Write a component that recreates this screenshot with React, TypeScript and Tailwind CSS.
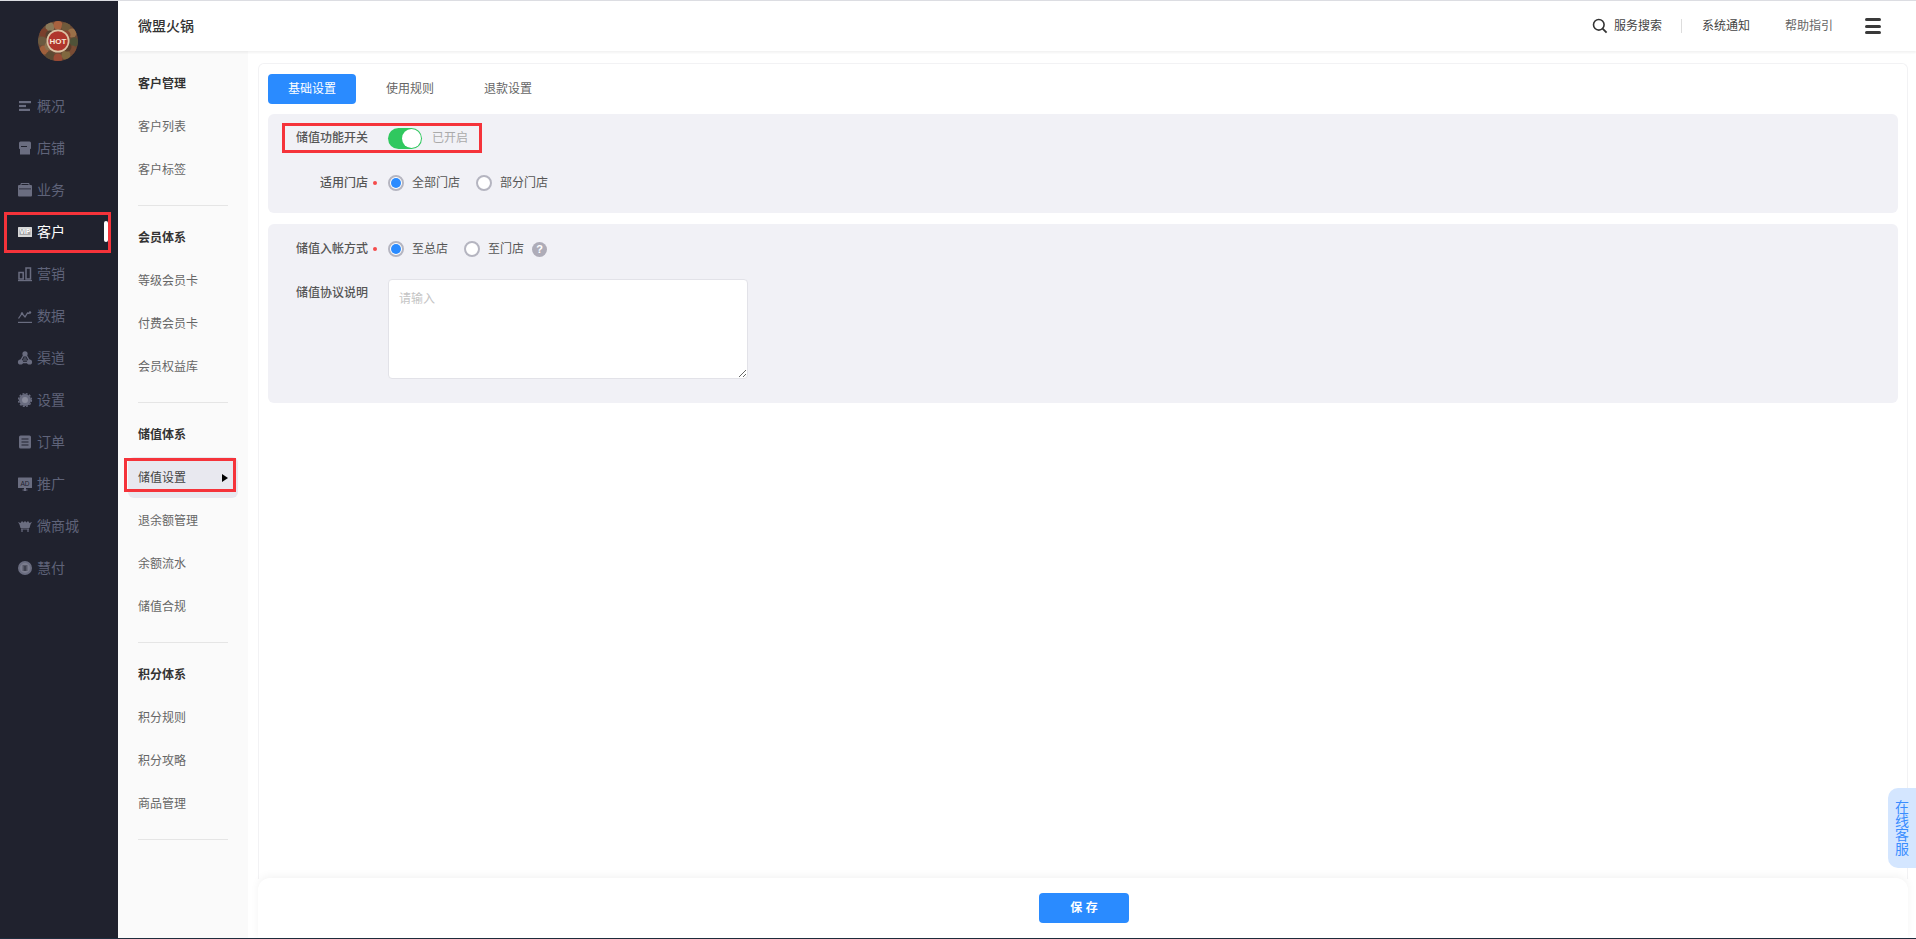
import React from "react";

const I = ({ children }: { children: React.ReactNode }) => (
  <svg width="16" height="16" viewBox="0 0 16 16" fill="none" className="shrink-0">{children}</svg>
);
const c = "currentColor";
const bg = "#20222e";
const icons: Record<string, React.ReactNode> = {
  overview: <I><rect x="2" y="3" width="12" height="2.2" fill={c}/><rect x="2" y="6.9" width="7" height="2.2" fill={c}/><rect x="2" y="10.8" width="11" height="2.2" fill={c}/></I>,
  shop: <I><path d="M2 3a1.5 1.5 0 0 1 1.5-1.5h9A1.5 1.5 0 0 1 14 3v5.5l-1 .8V14.5H3V9.300L2 8.500z" fill={c}/><rect x="4" y="6" width="6" height="1" fill={bg}/></I>,
  biz: <I><path d="M4 3V1.500h8V3" stroke={c}/><rect x="1" y="3" width="14" height="11.500" rx="1" fill={c}/><rect x="2" y="6.500" width="12" height=".8" fill={bg}/></I>,
  vip: <I><rect x="1" y="3" width="14" height="10" rx=".5" fill="#d8d8d8"/><rect x="2.500" y="5" width="11" height="6" fill="#a5a5a8"/><text x="8" y="10.300" fontSize="6.500" fontWeight="700" textAnchor="middle" fill="#fff" fontFamily="Liberation Sans">VIP</text></I>,
  market: <I><rect x="2" y="6.500" width="4.200" height="6.500" stroke={c} strokeWidth="1.500"/><rect x="9" y="2" width="4.500" height="11" stroke={c} strokeWidth="1.500"/><rect x="1" y="14" width="14" height="1.200" fill={c}/></I>,
  data: <I><path d="M1.500 10.500 5 5.500l3 3.500 2.500-4 2 .5" stroke={c} strokeWidth="1.300"/><circle cx="5" cy="5.500" r="1.200" fill={c}/><circle cx="13" cy="4.500" r="1.200" fill={c}/><rect x="1" y="13.800" width="14" height="1.200" fill={c}/></I>,
  channel: <I><path d="M8 3 13.500 12.500H2.500z" stroke={c} strokeWidth="1.400" strokeLinejoin="round"/><path d="M8 6 11 11H5z" fill={c} opacity=".5"/><circle cx="8" cy="3.800" r="2.600" fill={c}/><circle cx="3.500" cy="12" r="2.600" fill={c}/><circle cx="12.500" cy="12" r="2.600" fill={c}/></I>,
  setting: <I><circle cx="8" cy="8" r="6" fill={c}/><circle cx="8" cy="8" r="6.500" stroke={c} strokeWidth="1.200" strokeDasharray="2 1.400"/><circle cx="8" cy="8" r="3" fill="#8a8c9c"/></I>,
  order: <I><rect x="2" y="1.500" width="12" height="13" rx="1.500" fill={c}/><path d="M4.500 5h7M4.500 8h7M4.500 11h7" stroke={bg}/></I>,
  promo: <I><rect x="1" y="1.500" width="14" height="10.500" rx=".5" fill={c}/><rect x="7" y="12" width="2" height="3" fill={c}/><rect x="5.500" y="13.500" width="5" height="1" fill={c}/><text x="8" y="9.500" fontSize="6.500" textAnchor="middle" fill={bg} fontFamily="Liberation Sans">AD</text></I>,
  mall: <I><path d="M1 4 3.500 5 5 3l1.500 1.500L8 3l1.500 1.500L11 3l1.500 2L15 4l-1.500 2.500-1 3.500h-9l-1-3.500z" fill={c}/><path d="M4 11h8M5 11v3M11 11v3" stroke={c} strokeWidth="1.200"/></I>,
  pay: <I><circle cx="8" cy="8" r="7" fill={c}/><circle cx="8" cy="8" r="5" fill="#7b7d8e"/><path d="M5.500 6h5M5.500 8h5M5.500 10h5M8 6v5" stroke={bg} strokeWidth=".8"/></I>,
};

const mainNav: [string, string][] = [
  ["概况", "overview"], ["店铺", "shop"], ["业务", "biz"], ["客户", "vip"], ["营销", "market"], ["数据", "data"],
  ["渠道", "channel"], ["设置", "setting"], ["订单", "order"], ["推广", "promo"], ["微商城", "mall"], ["慧付", "pay"],
];

const subNav: { title: string; items: string[] }[] = [
  { title: "客户管理", items: ["客户列表", "客户标签"] },
  { title: "会员体系", items: ["等级会员卡", "付费会员卡", "会员权益库"] },
  { title: "储值体系", items: ["储值设置", "退余额管理", "余额流水", "储值合规"] },
  { title: "积分体系", items: ["积分规则", "积分攻略", "商品管理"] },
];

function Logo() {
  const dots: [number, number, string][] = [
    [12, 6, "#8a7a5a"], [20, 4, "#a8623f"], [28, 6, "#6f5a3b"], [6, 12, "#7a3f2c"], [34, 12, "#9a7048"], [4, 20, "#6b5a40"],
    [36, 21, "#4f5238"], [6, 29, "#a0603c"], [34, 29, "#7a4c34"], [12, 35, "#5c4a33"], [20, 37, "#9a4a35"], [28, 34, "#80683f"],
    [12, 14, "#55402f"], [28, 14, "#8a4632"], [11, 25, "#8a7050"], [29, 26, "#5c3d2b"],
  ];
  return (
    <svg width="40" height="40" viewBox="0 0 40 40">
      <defs><clipPath id="lc"><circle cx="20" cy="20" r="20" /></clipPath></defs>
      <g clipPath="url(#lc)">
        <rect width="40" height="40" fill="#6b4a36" />
        {dots.map(([x, y, f], i) => <circle key={i} cx={x} cy={y} r="4.500" fill={f} />)}
      </g>
      <circle cx="20" cy="20" r="11.500" fill="#dcc3a4" />
      <circle cx="20" cy="20" r="9.800" fill="#b0362c" />
      <text x="20" y="23" fontSize="8" fontWeight="700" textAnchor="middle" fill="#f7e6d8" fontFamily="Liberation Sans">HOT</text>
    </svg>
  );
}

function Radio({ on, label }: { on?: boolean; label: string }) {
  return (
    <div className="flex items-center gap-2">
      <span className="w-4 h-4 rounded-full border-2 border-[#b5b5c0] bg-white flex items-center justify-center">
        {on && <span className="w-[10px] h-[10px] rounded-full bg-[#2a8bff]" />}
      </span>
      <span className="text-[#555]">{label}</span>
    </div>
  );
}

function Label({ text, req }: { text: string; req?: boolean }) {
  return (
    <div className="w-[120px] pr-5 text-right text-[#555] font-medium relative shrink-0">
      {text}
      {req && <span className="absolute right-[11px] top-1/2 -mt-[2px] w-1 h-1 rounded-full bg-[#f54b4b]" />}
    </div>
  );
}

export default function App() {
  return (
    <div className="w-[1916px] h-[939px] flex flex-col overflow-hidden bg-white text-xs font-['Liberation_Sans','Noto_Sans_CJK_SC',sans-serif]">
      <div className="h-px bg-[#dcdde2] shrink-0" />
      <div className="flex flex-1 min-h-0">
        <aside className="w-[118px] bg-[#20222e] shrink-0 flex flex-col">
          <div className="h-[84px] pt-5 pl-[38px] shrink-0"><Logo /></div>
          {mainNav.map(([name, icon]) => {
            const active = name === "客户";
            return (
              <div key={name} className={"h-[42px] relative flex items-center gap-1 pl-[17px] text-sm " + (active ? "text-white" : "text-[#5f6379]")}>
                <span className={active ? "" : "text-[#6a6d80]"}>{icons[icon]}</span>
                <span>{name}</span>
                {active && <span className="absolute left-[104px] top-[10px] w-1 h-[21px] rounded-sm bg-white" />}
                {active && <span className="absolute left-[4px] top-px w-[107px] h-[41px] border-[3px] border-[#f5333a]" />}
              </div>
            );
          })}
        </aside>
        <div className="flex-1 flex flex-col min-w-0">
          <header className="h-[50px] bg-white shrink-0 flex items-center pl-5 pr-[35px] text-[#555] shadow-[0_2px_2px_rgba(0,0,0,0.05)] relative z-10">
            <span className="text-sm font-medium text-[#333]">微盟火锅</span>
            <div className="ml-auto flex items-center">
              <svg width="16" height="16" viewBox="0 0 16 16" fill="none" className="mr-[6px]"><circle cx="6.800" cy="6.800" r="5.300" stroke="#333" strokeWidth="1.600"/><path d="M10.600 10.600 14.600 14.600" stroke="#333" strokeWidth="1.800"/></svg>
              <span className="text-[#444]">服务搜索</span>
              <span className="w-px h-[14px] bg-[#ddd] ml-[19px] mr-5" />
              <span className="text-[#444]">系统通知</span>
              <span className="ml-[35px] text-[#666]">帮助指引</span>
              <div className="ml-8 w-4 flex flex-col gap-[3.5px]">
                <span className="h-[3px] rounded-sm bg-[#3a3a3a]" />
                <span className="h-[3px] rounded-sm bg-[#3a3a3a]" />
                <span className="h-[3px] rounded-sm bg-[#3a3a3a]" />
              </div>
            </div>
          </header>
          <div className="flex flex-1 min-h-0">
            <nav className="w-[130px] shrink-0 bg-[#fafafa] pt-[11px] pl-5 pr-5">
              {subNav.map((s) => (
                <div key={s.title} className="pb-[14px] mb-[10px] border-b border-[#e5e5e5]">
                  <div className="h-[43px] flex items-center font-bold text-[#333]">{s.title}</div>
                  {s.items.map((it) => {
                    const active = it === "储值设置";
                    return (
                      <div key={it} className={"h-[43px] flex items-center relative " + (active ? "text-[#444]" : "text-[#666]")}>
                        {active && <span className="absolute left-[-10px] w-[110px] top-[1px] h-[41px] rounded-md bg-[#e8e8ef]" />}
                        <span className="relative">{it}</span>
                        {active && <span className="absolute left-[84px] top-[18px] w-0 h-0 border-y-[4px] border-y-transparent border-l-[6px] border-l-black" />}
                        {active && <span className="absolute left-[-14px] top-[2px] w-[112px] h-[34px] border-[3px] border-[#f5333a]" />}
                      </div>
                    );
                  })}
                </div>
              ))}
            </nav>
            <main className="flex-1 min-w-0 flex flex-col pl-[10px] pr-2 bg-white">
              <div className="flex-1 min-h-0 mt-3 rounded-t-md border-x border-t border-[#f2f2f4] px-[9px] pt-[10px]">
                <div className="flex gap-[10px]">
                  <div className="w-[88px] h-[30px] rounded bg-[#2a8bff] text-white flex items-center justify-center">基础设置</div>
                  <div className="w-[88px] h-[30px] text-[#666] flex items-center justify-center">使用规则</div>
                  <div className="w-[88px] h-[30px] text-[#666] flex items-center justify-center">退款设置</div>
                </div>
                <section className="mt-[10px] h-[99px] rounded-md bg-[#f1f1f6] pt-[14px]">
                  <div className="h-5 flex items-center relative">
                    <Label text="储值功能开关" />
                    <div className="w-[34px] h-[21px] rounded-full bg-[#30c85f] relative shrink-0">
                      <span className="absolute right-[1px] top-[1px] w-[19px] h-[19px] rounded-full bg-white" />
                    </div>
                    <span className="ml-[10px] text-[#aaa]">已开启</span>
                    <span className="absolute left-[14px] top-[-5px] w-[200px] h-[30px] border-[3px] border-[#f5333a]" />
                  </div>
                  <div className="h-5 mt-[25px] flex items-center">
                    <Label text="适用门店" req />
                    <div className="flex gap-4">
                      <Radio on label="全部门店" />
                      <Radio label="部分门店" />
                    </div>
                  </div>
                </section>
                <section className="mt-[11px] h-[179px] rounded-md bg-[#f1f1f6] pt-[15px]">
                  <div className="h-5 flex items-center">
                    <Label text="储值入帐方式" req />
                    <div className="flex gap-4 items-center">
                      <Radio on label="至总店" />
                      <div className="flex items-center gap-2">
                        <Radio label="至门店" />
                        <span className="w-[15px] h-[15px] rounded-full bg-[#aeacb8] text-white text-[11px] leading-[15px] text-center font-bold">?</span>
                      </div>
                    </div>
                  </div>
                  <div className="flex mt-5">
                    <div className="pt-[6px]"><Label text="储值协议说明" /></div>
                    <textarea
                      placeholder="请输入"
                      className="w-[360px] h-[100px] rounded bg-white border border-[#e2e2e8] px-[10px] py-[11px] outline-none placeholder:text-[#c4c4c4]"
                    />
                  </div>
                </section>
              </div>
              <div className="h-[60px] shrink-0 rounded-t-xl bg-white shadow-[0_-2px_8px_rgba(0,0,0,0.05)] flex items-center justify-center relative -mt-px pl-[2px]">
                <button className="w-[90px] h-[30px] rounded bg-[#2a8bff] text-white font-semibold">保 存</button>
              </div>
            </main>
          </div>
        </div>
      </div>
      <div className="h-px bg-[#1f2d3d] shrink-0" />
      <div className="fixed left-[1888px] top-[788px] w-7 h-20 rounded-l-[10px] bg-[#d4e6ff] text-[#3a8dff] text-sm leading-[14px] flex items-center justify-center text-center">
        <span>在<br />线<br />客<br />服</span>
      </div>
    </div>
  );
}
